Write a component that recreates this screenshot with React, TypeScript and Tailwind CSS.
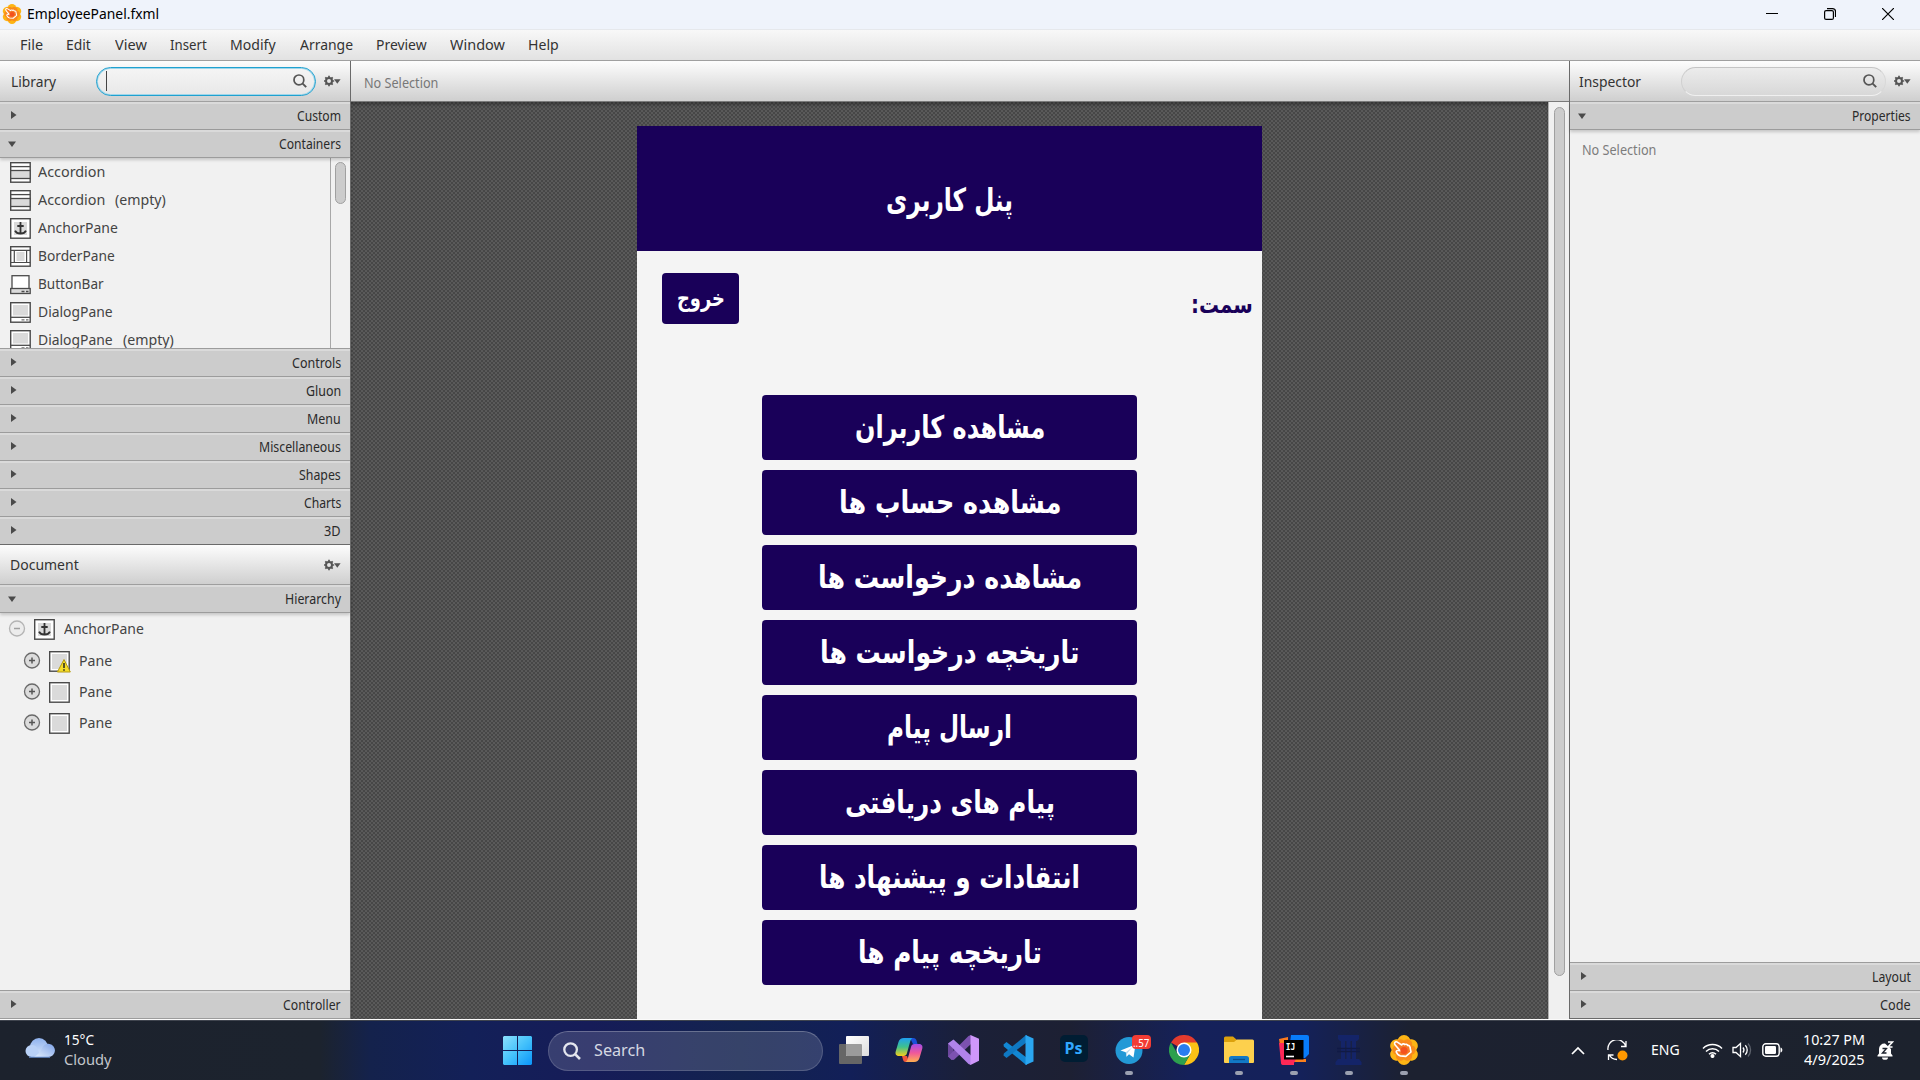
import { useLayoutEffect, useRef, useState, type ReactNode } from 'react';

/** One line of text that is condensed or widened to an exact width. */
function Fit({ w, className = '', rtl = false, children }: { w: number; className?: string; rtl?: boolean; children: ReactNode }) {
  const ref = useRef<HTMLSpanElement>(null);
  const [k, setK] = useState(1);
  useLayoutEffect(() => {
    if (ref.current && ref.current.offsetWidth) setK(w / ref.current.offsetWidth);
  }, [w]);
  return (
    <span className={`flex shrink-0 justify-start ${className}`} style={{ width: w }} dir="ltr">
      <span ref={ref} dir={rtl ? 'rtl' : 'ltr'} className="inline-block shrink-0 origin-left whitespace-pre" style={{ transform: `scaleX(${k})` }}>
        {children}
      </span>
    </span>
  );
}

function SceneLogo({ size }: { size: number }) {
  const lobes = [0, 60, 120, 180, 240, 300];
  return (
    <svg width={size} height={size} viewBox="0 0 30 30" className="shrink-0">
      {lobes.map((a) => (
        <circle key={a} cx="15" cy="6.7" r="6.6" fill="#fdb515" transform={`rotate(${a} 15 15)`} />
      ))}
      {lobes.map((a) => (
        <circle key={a} cx="15" cy="8.2" r="4.8" fill="#f98c1b" transform={`rotate(${a + 30} 15 15)`} />
      ))}
      <circle cx="15" cy="15" r="8.6" fill="#f9861d" />
      <path
        d="M5.800 7.600c.7-1.100 2-.9 2.900-.3l4 2.700c.6-1.300 2.200-1.500 3-.4 1-.8 2.400-.3 2.900.9 1.200-.4 2.300.5 2.400 1.700l1 4.800-5.200 4.400-5.400-.5c-1.500-.2-3.200-2-4.100-3.700-.4-1.200.6-1.900 1.700-1.700l2.200.3-4.800-5.600c-.6-.7-1.200-1.700-.7-2.600z"
        fill="#f57a25"
        stroke="#fff"
        strokeWidth="1.600"
        strokeLinejoin="round"
      />
      <circle cx="15" cy="15.500" r="3.600" fill="#f4511e" />
    </svg>
  );
}

function Gear() {
  return (
    <svg width="17" height="12" viewBox="0 0 17 12" className="shrink-0">
      <circle cx="5" cy="6" r="3" fill="none" stroke="#555" strokeWidth="2" />
      <g stroke="#555" strokeWidth="1.7">
        <path d="M5 .8v2M5 9.200v2M-.2 6h2M8.200 6h2M1.300 2.300l1.400 1.400M7.300 8.300l1.400 1.400M1.300 9.700l1.400-1.400M7.300 3.700l1.400-1.400" />
      </g>
      <path d="M10 4.200h6.600l-3.300 4.600z" fill="#555" />
    </svg>
  );
}

function Magnifier({ size = 14, color = '#555', sw = 1.7 }: { size?: number; color?: string; sw?: number }) {
  return (
    <svg width={size} height={size} viewBox="0 0 14 14" className="shrink-0">
      <circle cx="5.900" cy="5.900" r="4.900" fill="none" stroke={color} strokeWidth={sw} />
      <path d="M9.400 9.400l3.800 3.800" stroke={color} strokeWidth={sw + 0.2} />
    </svg>
  );
}

function SectionBar({ label, w, open = false, dark = false }: { label: string; w: number; open?: boolean; dark?: boolean }) {
  return (
    <div
      className={`flex h-7 shrink-0 items-start justify-between border-t-2 border-b border-t-[#dadada] bg-[#cccccc] pr-[9px] text-[13.5px] leading-[24px] text-[#2a2a2a] ${
        dark ? 'border-b-[#6a6a6a]' : 'border-b-[#9c9c9c]'
      } ${open ? 'relative shadow-[0_2px_3px_rgba(0,0,0,0.18)]' : ''}`}
    >
      {open ? (
        <svg width="8" height="6" className="mt-[9px] ml-2">
          <path d="M0 .5h8L4 6z" fill="#4a4a4a" />
        </svg>
      ) : (
        <svg width="6" height="8" className="mt-[7px] ml-[10.5px]">
          <path d="M0 0v8l5.500-4z" fill="#4a4a4a" />
        </svg>
      )}
      <Fit w={w}>{label}</Fit>
    </div>
  );
}

function Anchor() {
  return (
    <g>
      <rect x="4" y="4" width="13" height="13" fill="#dadada" />
      <path d="M10.500 4v12M7.300 8h6.400M5 12.700c1 2.200 3 3 5.500 3s4.500-.8 5.500-3" fill="none" stroke="#333" strokeWidth="1.800" />
    </g>
  );
}

function NodeIcon({ kind, warn = false }: { kind: string; warn?: boolean }) {
  return (
    <svg width="22" height="22" viewBox="0 0 22 22" className="shrink-0">
      {kind === 'buttonbar' ? (
        <g stroke="#4a4a4a" strokeWidth="1.300">
          <rect x="2" y="1.700" width="17" height="14" fill="#fff" />
          <rect x=".7" y="14.500" width="19.500" height="5" fill="#dadada" />
          <path d="M11.500 17.500h3M16 17.500h2.500" />
        </g>
      ) : (
        <rect x=".7" y=".7" width="19.500" height="19.500" fill="#fff" stroke="#4a4a4a" strokeWidth="1.400" />
      )}
      {kind === 'accordion' && (
        <g stroke="#4a4a4a" strokeWidth="1.300">
          <rect x=".7" y="8.500" width="19.500" height="8" fill="#dadada" />
          <path d="M.7 4.600h19.500" />
        </g>
      )}
      {kind === 'anchor' && <Anchor />}
      {kind === 'border' && (
        <g stroke="#4a4a4a" strokeWidth="1.200" fill="none">
          <rect x="6.500" y="6" width="8" height="9" fill="#dadada" stroke="none" />
          <path d="M.7 4.300h19.500M.7 16.500h19.500M4.300 4.300v12.200M16.600 4.300v12.200" />
        </g>
      )}
      {kind === 'dialog' && (
        <g stroke="#4a4a4a">
          <rect x="3" y="3" width="15" height="10.500" fill="#dadada" stroke="none" />
          <path d="M.7 15.300h19.500" strokeWidth="1.300" />
          <path d="M11.500 17.900h3M16 17.900h2.500" strokeWidth="1" />
        </g>
      )}
      {kind === 'pane' && <rect x="3" y="3" width="15" height="15" fill="#dadada" />}
      {warn && (
        <g>
          <path d="M15 8.500l6.300 12.500H8.400z" fill="#f5dc28" stroke="#b59a10" strokeWidth="1" strokeLinejoin="round" />
          <path d="M15 12v5M15 18.200v1.600" stroke="#222" strokeWidth="1.500" />
        </g>
      )}
    </svg>
  );
}

const library: [string, string, number, boolean][] = [
  ['accordion', 'Accordion', 67, false],
  ['accordion', 'Accordion', 67, true],
  ['anchor', 'AnchorPane', 80, false],
  ['border', 'BorderPane', 77, false],
  ['buttonbar', 'ButtonBar', 66, false],
  ['dialog', 'DialogPane', 75, false],
  ['dialog', 'DialogPane', 75, true],
];

const menus: [string, number, string][] = [
  ['File', 23, 'w-[46px]'],
  ['Edit', 25, 'w-[49px]'],
  ['View', 32, 'w-[55px]'],
  ['Insert', 37, 'w-[60px]'],
  ['Modify', 46, 'w-[70px]'],
  ['Arrange', 53, 'w-[76px]'],
  ['Preview', 51, 'w-[74px]'],
  ['Window', 55, 'w-[78px]'],
  ['Help', 31, 'w-[40px]'],
];

const actions: [string, number][] = [
  ['مشاهده کاربران', 190],
  ['مشاهده حساب ها', 222],
  ['مشاهده درخواست ها', 264],
  ['تاریخچه درخواست ها', 259],
  ['ارسال پیام', 125],
  ['پیام های دریافتی', 210],
  ['انتقادات و پیشنهاد ها', 261],
  ['تاریخچه پیام ها', 184],
];

function TreeRow({ label, w, root = false, kind, warn = false }: { label: string; w: number; root?: boolean; kind: string; warn?: boolean }) {
  return (
    <div className={`flex h-[31px] items-center ${root ? 'pl-2' : 'pl-[23px]'}`}>
      <svg width="18" height="18" viewBox="0 0 18 18" className="mt-px mr-2 shrink-0">
        <circle cx="9" cy="8.500" r="7.500" fill={root ? '#ececec' : '#dcdcdc'} stroke={root ? '#b4b4b4' : '#6a6a6a'} strokeWidth="1.300" />
        <path d={root ? 'M6 8.500h6' : 'M6 8.500h6M9 5.500v6'} stroke={root ? '#a0a0a0' : '#555'} strokeWidth="1.500" />
      </svg>
      <div className="mt-[2px]"><NodeIcon kind={kind} warn={warn} /></div>
      <Fit w={w} className="ml-2">{label}</Fit>
    </div>
  );
}

function Cloud() {
  return (
    <svg width="30" height="20" viewBox="0 0 30 20" className="shrink-0">
      <defs>
        <linearGradient id="cl" x1="0" y1="0" x2="0" y2="1">
          <stop offset="0" stopColor="#8fb2ee" />
          <stop offset="1" stopColor="#d5e5fb" />
        </linearGradient>
        <linearGradient id="cl2" x1="1" y1="0" x2="0" y2="1">
          <stop offset="0" stopColor="#7ea3e8" />
          <stop offset="1" stopColor="#e3effd" />
        </linearGradient>
      </defs>
      <circle cx="14" cy="9" r="9" fill="url(#cl)" />
      <path d="M6.500 7a6.200 6.200 0 0 1 6 4L16 19H6.500a6 6 0 0 1 0-12z" fill="#b9d1f7" />
      <path d="M9 19h14.500a6.600 6.600 0 1 0-6.500-8.500C15 14 13 17 9 19z" fill="url(#cl2)" />
      <path d="M4 19.200h21" stroke="#6f98dd" strokeWidth="1" />
    </svg>
  );
}

const taskIcons: { run: boolean; art: ReactNode }[] = [
  {
    run: false,
    art: (
      <svg width="30" height="30" viewBox="0 0 30 30">
        <defs>
          <linearGradient id="tv" x1="0" y1="0" x2="1" y2="1"><stop offset="0" stopColor="#fff" /><stop offset="1" stopColor="#ddd" /></linearGradient>
        </defs>
        <rect x="0" y="9" width="23" height="20" rx="1" fill="#666" />
        <rect x="7" y="1" width="23" height="20" rx="1" fill="url(#tv)" />
        <path d="M7 9h15a1 1 0 0 1 1 1v11H8a1 1 0 0 1-1-1z" fill="#9b9b9b" />
      </svg>
    ),
  },
  {
    run: false,
    art: (
      <svg width="28" height="28" viewBox="0 0 28 28">
        <defs>
          <linearGradient id="c1" x1="0" y1="0" x2="0" y2="1"><stop offset="0" stopColor="#1fa0f2" /><stop offset=".5" stopColor="#3fc18c" /><stop offset="1" stopColor="#f5cf1c" /></linearGradient>
          <linearGradient id="c2" x1="0" y1="0" x2="0" y2="1"><stop offset="0" stopColor="#a24ce8" /><stop offset=".5" stopColor="#f0589a" /><stop offset="1" stopColor="#ffb050" /></linearGradient>
        </defs>
        <path d="M15 2h3.500c1.600 0 2.500 1 3 2.500L22.500 8H18z" fill="#1a4fd8" />
        <path d="M7 20h5l2 6H10.500c-1.300 0-2-.8-2.400-2z" fill="#f0553a" />
        <path d="M9 2h8.500c-1.500 1-2 2.500-2.600 4.500L12 17c-.7 2.200-1.500 3-3.500 3H4c-2.500 0-4-1.500-3.300-4.500L3.500 6C4.400 3.200 6 2 9 2z" fill="url(#c1)" />
        <path d="M19 26h-8.500c1.500-1 2-2.500 2.600-4.500L16 11c.7-2.200 1.500-3 3.500-3H24c2.500 0 4 1.500 3.300 4.500L24.500 22c-.9 2.800-2.500 4-5.500 4z" fill="url(#c2)" />
      </svg>
    ),
  },
  {
    run: false,
    art: (
      <svg width="31" height="30" viewBox="0 0 31 30">
        <path d="M0 8.500L5.500 5v20L0 21.500z" fill="#6b479c" />
        <path d="M0 21.500L20.500 1 23 0v9L6 24.800 3.500 25z" fill="#7c52b0" />
        <path d="M0 8.500L5.500 4.500 23 20.500V30l-2.500-1z" fill="#b083ea" />
        <path d="M22.500 0L31 3.800v22L22.500 30z" fill="#cf97fa" />
      </svg>
    ),
  },
  {
    run: false,
    art: (
      <svg width="31" height="30" viewBox="0 0 31 30">
        <path d="M.5 9.500l3-2.500L24 23v7l-1.500-.5L.8 11.500z" fill="#1287d3" />
        <path d="M.5 20.500l3 2.500L24 7V0l-1.500.5L.8 18.500z" fill="#0f78c2" />
        <path d="M22.500 0L30.500 3.500v23l-8 3.500z" fill="#2ba6f0" />
      </svg>
    ),
  },
  {
    run: false,
    art: (
      <div className="mb-[3px] flex h-[27px] w-[28px] items-center justify-center rounded-[5px] bg-[#001d33] pb-px font-['Noto_Sans'] text-[16px] leading-none font-bold text-[#31a8ff]">
        <Fit w={18}>Ps</Fit>
      </div>
    ),
  },
  {
    run: true,
    art: (
      <div className="relative">
        <svg width="28" height="28" viewBox="0 0 28 28">
          <circle cx="14" cy="14.500" r="13.500" fill="#2399d6" />
          <path d="M5.500 14.500L20.500 8.500 18.500 21.500l-4.500-3.300-2.500 2.500-.7-4.500z" fill="#fff" />
          <path d="M10.800 16.200l6.500-4.900-5 6-.8 3.400z" fill="#b8d9ec" />
        </svg>
        <span className="absolute -top-px left-[17px] flex h-[14px] w-[19px] items-center justify-center rounded-[4px] bg-[#f23c34] text-[11px] leading-none text-white">
          <Fit w={16}>..57</Fit>
        </span>
      </div>
    ),
  },
  {
    run: false,
    art: (
      <svg width="30" height="30" viewBox="0 0 30 30">
        <path d="M15 15L2 7.500A15 15 0 0 1 28 7.500z" fill="#e33b2e" />
        <path d="M15 7.500h13A15 15 0 0 1 15 30L21.500 18.700z" fill="#fbc116" />
        <path d="M2 7.500A15 15 0 0 0 15 30l6.500-11.300L8.500 18.700z" fill="#2da04e" />
        <circle cx="15" cy="15" r="7.500" fill="#fff" />
        <circle cx="15" cy="15" r="6" fill="#2a7df0" />
      </svg>
    ),
  },
  {
    run: true,
    art: (
      <svg width="30" height="28" viewBox="0 0 30 28">
        <path d="M0 2a1.500 1.500 0 0 1 1.500-1.500H9L13 4v6H0z" fill="#dca10c" />
        <path d="M0 6h10l3-2.500h15.500A1.500 1.500 0 0 1 30 5v21a1 1 0 0 1-1 1H1a1 1 0 0 1-1-1z" fill="#fdd04d" />
        <path d="M5 27v-4.500A2.500 2.500 0 0 1 7.500 20h15a2.500 2.500 0 0 1 2.500 2.500V27z" fill="#1279c6" />
        <path d="M9 23.500h12" stroke="#0b4f8c" strokeWidth="1.300" />
      </svg>
    ),
  },
  {
    run: true,
    art: (
      <svg width="30" height="30" viewBox="0 0 30 30">
        <path d="M0 4l9-2v9H1z" fill="#fb7a1e" />
        <path d="M12 0h16a2 2 0 0 1 2 2v17l-4 4H9z" fill="#087cfa" />
        <path d="M0 8h6v16h9v6H4a2 2 0 0 1-2-2z" fill="#fe2857" />
        <path d="M15 24h12v3H15z" fill="#fc801d" />
        <path d="M14 22l3 2-3 6H4l-2-2z" fill="#fe2857" />
        <rect x="5" y="5" width="19.500" height="19.500" fill="#000" />
        <path d="M7 21.500h8" stroke="#fff" strokeWidth="1.600" />
        <text x="6.800" y="14.800" fill="#fff" fontSize="9.500" fontWeight="bold" fontFamily="DejaVu Sans Mono, monospace" textLength="9.500" lengthAdjust="spacingAndGlyphs">IJ</text>
      </svg>
    ),
  },
  {
    run: true,
    art: (
      <svg width="27" height="30" viewBox="0 0 27 30">
        <g fill="#142468">
          <path d="M3 0h21v4l-2 2H5L3 4zM3 24h21l2.500 3v3H.5v-3z" />
          <path d="M6 6h4v18H6zM11.500 6h4v18h-4zM17 6h4v18h-4z" />
        </g>
        <path d="M2 13.500h23M2 16.500h23" stroke="#101a45" strokeWidth="1.300" />
      </svg>
    ),
  },
  { run: true, art: <SceneLogo size={30} /> },
];

export default function App() {
  return (
    <div className="flex h-[1080px] w-[1920px] flex-col overflow-hidden bg-[#f1f1f1] font-['Noto_Sans',sans-serif] text-[15px] text-[#444]">
      {/* Title bar */}
      <header className="flex h-[30px] shrink-0 items-center border-b border-[#e6e8ec] bg-[#eff3fb] pr-[26px] pl-[2px] text-[14.500px] text-black">
        <div className="-mt-0.5"><SceneLogo size={20} /></div>
        <Fit w={132} className="-mt-px ml-[5px]">EmployeePanel.fxml</Fit>
        <div className="-mt-px ml-auto flex items-center gap-[46px]">
          <svg width="12" height="12"><path d="M0 5.500h12" stroke="#000" /></svg>
          <svg width="12" height="12" viewBox="0 0 12 12" fill="none" stroke="#000" strokeWidth="1.200">
            <rect x=".6" y="2.600" width="8.800" height="8.800" rx="1.500" />
            <path d="M3 .6h5.500a3 3 0 0 1 3 3V9" />
          </svg>
          <svg width="12" height="12" viewBox="0 0 12 12"><path d="M0 0l12 12M12 0L0 12" stroke="#000" strokeWidth="1.200" /></svg>
        </div>
      </header>

      {/* Menu bar */}
      <nav className="flex h-[31px] shrink-0 items-center border-b border-[#9f9f9f] bg-linear-to-b from-[#f8f8f8] to-[#e2e2e2] pb-[2px] pl-5 text-[#333]">
        {menus.map(([m, w, slot]) => (
          <div key={m} className={`shrink-0 ${slot}`}><Fit w={w}>{m}</Fit></div>
        ))}
      </nav>

      <div className="flex h-[958px] shrink-0">
        {/* Library and document */}
        <aside className="flex w-[351px] shrink-0 flex-col border-r border-[#6a6a6a]">
          <div className="flex h-[41px] shrink-0 items-center border-b border-[#a0a0a0] bg-linear-to-b from-[#fdfdfd] to-[#cfcfcf] pl-[11px] text-[#333]">
            <Fit w={45}>Library</Fit>
            <div className="ml-10 flex h-[29px] w-[220px] items-center rounded-full border-[1.5px] border-[#1fa1d0] bg-linear-to-b from-[#f5f5f5] to-[#e8e8e8] pr-2 pl-[9px] shadow-[inset_0_0_0_1px_#9fd6ea]">
              <div className="h-5 w-px bg-[#444]" />
              <div className="ml-auto"><Magnifier /></div>
            </div>
            <div className="ml-[8px]"><Gear /></div>
          </div>
          <SectionBar label="Custom" w={44} />
          <SectionBar label="Containers" w={62} open />
          <div className="flex h-[190px] shrink-0 overflow-hidden">
            <div className="flex w-[330px] flex-col">
              {library.map(([kind, label, w, empty], i) => (
                <div key={i} className="flex h-7 shrink-0 items-start pt-1 pl-[10px] leading-5">
                  <NodeIcon kind={kind} />
                  <Fit w={w} className="-mt-px ml-[6px]">{label}</Fit>
                  {empty && <Fit w={51} className="-mt-px ml-[10px]">(empty)</Fit>}
                </div>
              ))}
            </div>
            <div className="flex w-5 justify-center border-l border-[#a8a8a8] pt-[4px]">
              <div className="h-[42px] w-[11px] rounded-full border border-[#a0a0a0] bg-[#cccccc]" />
            </div>
          </div>
          <div className="h-px shrink-0 bg-[#9c9c9c]" />
          <SectionBar label="Controls" w={49} />
          <SectionBar label="Gluon" w={35} />
          <SectionBar label="Menu" w={34} />
          <SectionBar label="Miscellaneous" w={82} />
          <SectionBar label="Shapes" w={42} />
          <SectionBar label="Charts" w={37} />
          <SectionBar label="3D" w={17} dark />
          <div className="flex h-[40px] shrink-0 items-center justify-between border-b border-[#a0a0a0] bg-linear-to-b from-[#fdfdfd] to-[#cfcfcf] pr-[9px] pl-[10px] text-[#333]">
            <Fit w={69}>Document</Fit>
            <Gear />
          </div>
          <SectionBar label="Hierarchy" w={56} open />
          <div className="flex flex-1 flex-col">
            <TreeRow root label="AnchorPane" w={80} kind="anchor" />
            <div className="pt-px">
              <TreeRow label="Pane" w={33} kind="pane" warn />
              <TreeRow label="Pane" w={33} kind="pane" />
              <TreeRow label="Pane" w={33} kind="pane" />
            </div>
          </div>
          <div className="h-px shrink-0 bg-[#9c9c9c]" />
          <SectionBar label="Controller" w={58} />
        </aside>

        {/* Design canvas */}
        <main className="flex w-[1218px] shrink-0 flex-col">
          <div className="flex h-[41px] shrink-0 items-center border-b border-[#7a7a7a] bg-linear-to-b from-[#fdfdfd] to-[#cfcfcf] pt-1 pl-[13px] text-[13.500px] text-[#777]">
            <Fit w={74}>No Selection</Fit>
          </div>
          <div className="flex flex-1 overflow-hidden">
            <div className="flex flex-1 justify-center bg-[#4b4b4b] bg-[repeating-conic-gradient(#5a5a5a_0_25%,#474747_0_50%)] bg-size-[4px_4px] pt-6 shadow-[inset_0_3px_3px_rgba(0,0,0,0.25)]">
              <section className="h-full w-[625px] bg-[#f4f4f4] font-['DejaVu_Sans',sans-serif] font-bold">
                <div className="flex h-[125px] items-center justify-center bg-[#190059] pt-[22px] text-[32px] text-white">
                  <Fit w={127} rtl>پنل کاربری</Fit>
                </div>
                <div className="flex items-start justify-between pt-[22px] pr-[9px] pl-[25px]">
                  <button className="flex h-[51px] w-[77px] items-center justify-center rounded-[4px] bg-[#190059] text-[23px] text-white">
                    <Fit w={48} rtl>خروج</Fit>
                  </button>
                  <Fit w={62} rtl className="mt-[17px] text-[24px] leading-[30px] text-[#190059]">سمت:</Fit>
                </div>
                <div className="mt-[71px] flex flex-col items-center gap-[10px]">
                  {actions.map(([t, w]) => (
                    <button key={t} className="flex h-[65px] w-[375px] items-center justify-center rounded-[4px] bg-[#190059] text-[31px] text-white">
                      <Fit w={w} rtl>{t}</Fit>
                    </button>
                  ))}
                </div>
              </section>
            </div>
            <div className="flex w-[21px] shrink-0 justify-center border-l border-[#b0b0b0] bg-[#f0f0f0] pt-[5px]">
              <div className="h-[869px] w-[11px] rounded-full border border-[#a0a0a0] bg-[#cccccc]" />
            </div>
          </div>
        </main>

        {/* Inspector */}
        <aside className="flex w-[351px] shrink-0 flex-col border-l border-[#6a6a6a]">
          <div className="flex h-[41px] shrink-0 items-center border-b border-[#a0a0a0] bg-linear-to-b from-[#fdfdfd] to-[#cfcfcf] pl-[9px] text-[#333]">
            <Fit w={62}>Inspector</Fit>
            <div className="ml-10 flex h-[29px] w-[205px] items-center justify-end rounded-full border border-t-[#c4c4c4] border-r-[#d8d8d8] border-b-[#f0f0f0] border-l-[#d0d0d0] bg-linear-to-b from-[#ececec] to-[#d8d8d8] pr-2">
              <Magnifier />
            </div>
            <div className="ml-[8px]"><Gear /></div>
          </div>
          <SectionBar label="Properties" w={59} open />
          <div className="flex-1 pt-[9px] pl-3 text-[13.500px] leading-[22px] text-[#7c7c7c]">
            <Fit w={74}>No Selection</Fit>
          </div>
          <div className="h-px shrink-0 bg-[#9c9c9c]" />
          <SectionBar label="Layout" w={39} />
          <SectionBar label="Code" w={31} dark />
        </aside>
      </div>

      <div className="h-px shrink-0 bg-[#fafafa]" />

      {/* Taskbar */}
      <footer className="flex h-[60px] shrink-0 items-center border-t border-[#3f444e] bg-[linear-gradient(90deg,#1c222d_0px,#1c232e_320px,#14224c_370px,#132058_470px,#161c58_590px,#13234f_740px,#121f58_850px,#1b2038_970px,#1d2033_1070px,#15215a_1190px,#14215a_1300px,#1c2130_1410px,#1c222d_1920px)] text-white">
        <div className="flex w-[503px] shrink-0 items-center pb-1 pl-[25px]">
          <div className="-mt-[2px]"><Cloud /></div>
          <div className="ml-[9px] flex flex-col text-[15px] leading-5">
            <Fit w={30}>15°C</Fit>
            <Fit w={48} className="text-[#c3c6cc]">Cloudy</Fit>
          </div>
        </div>
        <svg width="29" height="29" viewBox="0 0 29 29" className="shrink-0">
          <defs>
            <linearGradient id="wn" x1="0" y1="0" x2="1" y2="1"><stop offset="0" stopColor="#8be0fd" /><stop offset=".5" stopColor="#45c2fb" /><stop offset="1" stopColor="#0a95fb" /></linearGradient>
          </defs>
          <path d="M1 0h13v14H0V1zM15 0h13l1 1v13H15zM0 15h14v14H1l-1-1zM15 15h14v13l-1 1H15z" fill="url(#wn)" />
        </svg>
        <div className="ml-4 flex h-10 w-[275px] shrink-0 items-center rounded-full border border-white/15 border-t-white/25 bg-white/15 pl-[14px] text-[16.500px] text-[#d5d8e2]">
          <Magnifier size={18} color="#e4e6ee" sw={1.8} />
          <Fit w={51} className="ml-[13px]">Search</Fit>
        </div>
        <div className="ml-[3px] flex h-full">
          {taskIcons.map((t, i) => (
            <div key={i} className="flex h-full w-[55px] flex-col items-center">
              <div className="flex h-[49px] items-start justify-center pt-[12px]">
                <div className="flex h-[34px] items-center">{t.art}</div>
              </div>
              {t.run && <div className="mt-px h-1 w-2 rounded-full bg-[#9ba0b0]" />}
            </div>
          ))}
        </div>
        <div className="ml-auto flex items-center pr-[26px] pb-px">
          <svg width="14" height="9" viewBox="0 0 14 9"><path d="M1 8l6-6 6 6" fill="none" stroke="#fff" strokeWidth="1.700" /></svg>
          <svg width="21" height="21" viewBox="0 0 21 21" className="ml-[22px]">
            <path d="M1 10A9 9 0 0 1 18.500 6M19 1v5.500h-5M1.500 20v-5h5M2 14.500A9 9 0 0 0 10 19.500" fill="none" stroke="#fff" strokeWidth="1.300" />
            <circle cx="15.500" cy="15.500" r="5" fill="#ff9800" />
          </svg>
          <Fit w={29} className="ml-[23px] text-[14.500px]">ENG</Fit>
          <svg width="21" height="16" viewBox="0 0 21 16" className="ml-[22px]" fill="none" stroke="#fff" strokeWidth="1.500">
            <path d="M1 6.500a13.500 13.500 0 0 1 19 0M4 9.500a9.200 9.200 0 0 1 13 0M7 12.300a5 5 0 0 1 7 0" />
            <circle cx="10.500" cy="14" r="1.300" fill="#fff" />
          </svg>
          <svg width="21" height="16" viewBox="0 0 21 16" className="ml-[9px]" fill="none" stroke="#fff" strokeWidth="1.300">
            <path d="M1 5.500h3L8.500 1.500v13L4 10.500H1z" />
            <path d="M11 5.500a4 4 0 0 1 0 5M13.300 3.200a7 7 0 0 1 0 9.600" />
            <path d="M16 1.500a9.500 9.500 0 0 1 0 13" stroke="#5d626c" />
          </svg>
          <svg width="21" height="14" viewBox="0 0 21 14" className="ml-[9px]">
            <rect x=".8" y=".8" width="16.400" height="12.400" rx="3" fill="none" stroke="#fff" strokeWidth="1.400" />
            <rect x="3" y="3" width="11" height="8" rx="1.200" fill="#fff" />
            <path d="M18.500 4.500v5c1 0 1.800-1 1.800-2.500s-.8-2.500-1.800-2.500z" fill="#fff" />
          </svg>
          <div className="-mt-[3px] ml-[20px] flex flex-col items-end text-[15px] leading-5">
            <Fit w={62}>10:27 PM</Fit>
            <Fit w={61}>4/9/2025</Fit>
          </div>
          <svg width="18" height="19" viewBox="0 0 18 19" className="ml-[11px]">
            <path d="M1.500 14.500l1.500-2V8a5.500 5.500 0 0 1 6-5.500L15 8v4.500l1.500 2v1h-15z" fill="#fff" />
            <path d="M6 16.500h6a3 2.300 0 0 1-6 0z" fill="#fff" />
            <path d="M6.500 7.500h4l-4 4.500h4" fill="none" stroke="#1c222d" strokeWidth="1.400" />
            <path d="M12 1h4.500l-4.500 5h4.500" fill="none" stroke="#fff" strokeWidth="1.500" />
          </svg>
        </div>
      </footer>
    </div>
  );
}
